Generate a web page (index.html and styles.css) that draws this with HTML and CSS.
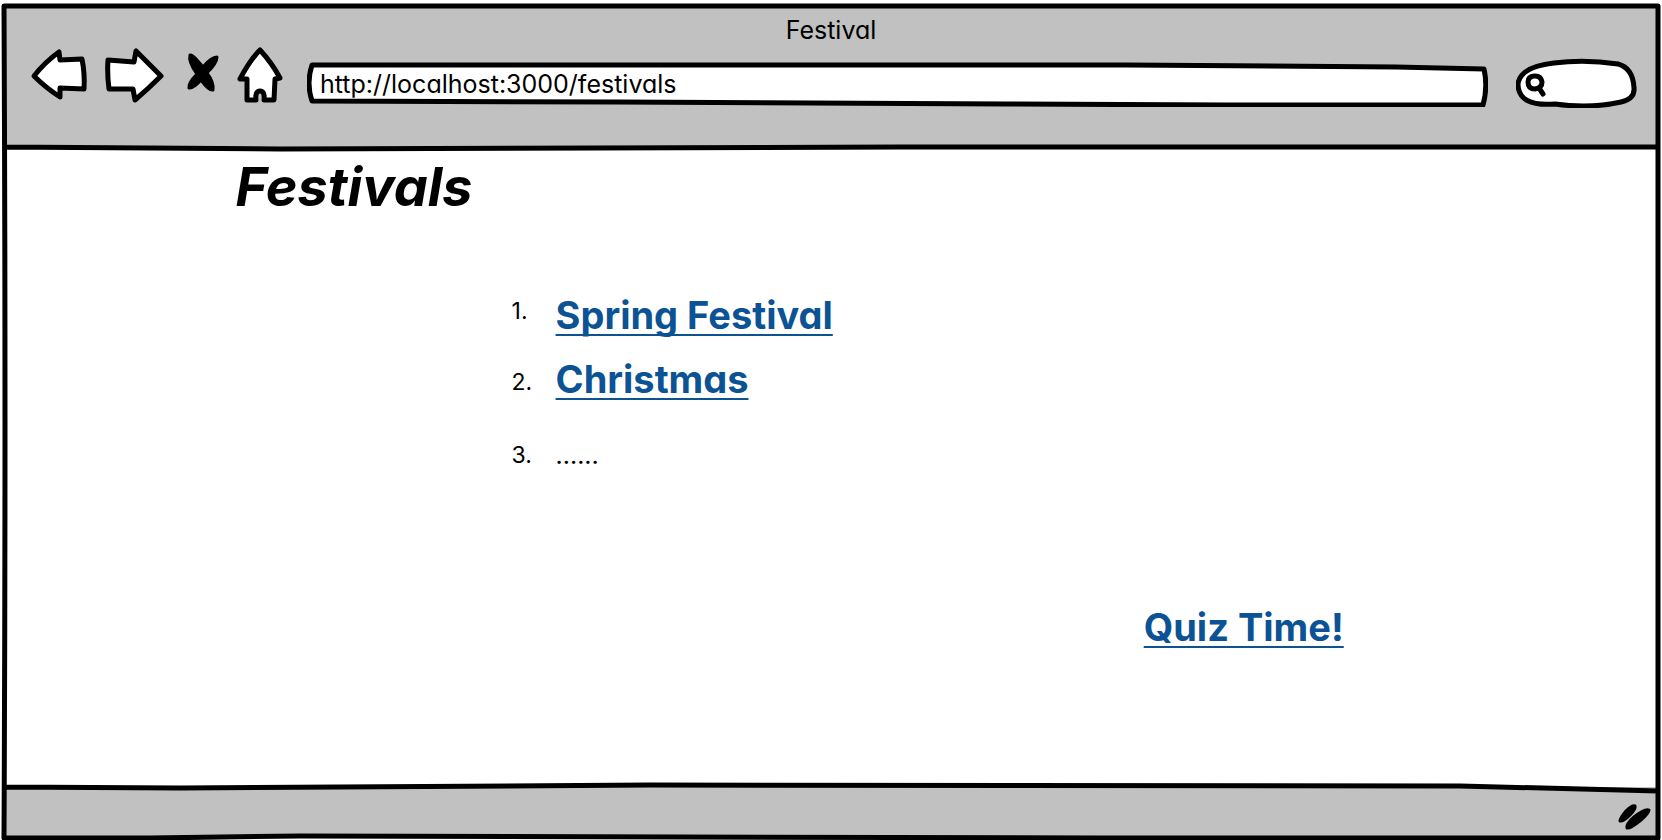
FILE: index.html
```html
<!DOCTYPE html>
<html lang="en">
<head>
<meta charset="utf-8">
<title>Festival</title>
<link rel="stylesheet" href="styles.css">
</head>
<body>
<div class="window">
  <header class="chrome">
    <div class="window-title">Festival</div>
    <div class="toolbar">
      <nav class="nav-buttons">
        <button class="nav-button" type="button" aria-label="Back"><svg width="58" height="56" viewBox="30 48 58 56"><path class="outline" d="M34 77 Q45 63 59 53 L60 61 L82 60 Q85 75 84 90 L60 89 L60 98 Q46 89 34 77Z"/></svg></button>
        <button class="nav-button" type="button" aria-label="Forward"><svg width="60" height="58" viewBox="104 48 60 58"><path class="outline" d="M161 77 L136 52 L134 63 L108 61 Q107 75 109 90 L133 90 L135 101 Q148 90 161 77Z"/></svg></button>
        <button class="nav-button stop" type="button" aria-label="Stop"><svg width="34" height="42" viewBox="187 52 34 42"><path class="stroke" d="M191 55 Q194 55 198 60 L204 67 Q212 57 218 57 Q218 63 208 73 Q215 82 214 90 Q210 91 202 80 Q194 89 190 88 Q189 83 198 74 Q189 62 191 55Z"/></svg></button>
        <button class="nav-button" type="button" aria-label="Home"><svg width="48" height="58" viewBox="236 47 48 58"><path class="outline" d="M260 50 Q250 60 240 79 L247 79 L247 100 L256 100 Q255 91 260 91 Q265 91 264 100 L274 100 L275 79 L280 78 Q272 63 260 50Z"/></svg></button>
      </nav>
      <form class="address">
        <svg class="sketch" viewBox="0 0 1182 46" preserveAspectRatio="none" aria-hidden="true"><path class="outline" d="M5 4 L820 4 L1090 6 L1178 8 Q1182 26 1177 44 L920 44 L700 43 L310 41 L5 40 Q-1 22 5 4Z"/></svg>
        <input class="address-input" type="text" aria-label="Address" value="http://localhost:3000/festivals">
      </form>
      <form class="search">
        <svg class="sketch" viewBox="1516 58 122 50" preserveAspectRatio="none" aria-hidden="true"><path class="outline" d="M1554 63 Q1585 59 1618 64 Q1633 68 1634 88 Q1635 99 1621 102 Q1590 109 1555 104 Q1518 107 1518 84 Q1520 67 1554 63Z"/></svg>
        <svg class="search-icon" width="24" height="26" viewBox="1524 74 24 26" aria-hidden="true"><path class="outline" d="M1535 78 Q1528 78 1528 84 Q1528 91 1535 91 Q1542 90 1542 84 Q1541 78 1535 78Z M1539 90 L1543 96"/></svg>
        <input class="search-input" type="text" aria-label="Search">
      </form>
    </div>
  </header>
  <main class="page">
    <h1 class="heading">Festivals</h1>
    <ol class="festivals">
      <li class="festival raised"><span class="number">1.</span><a class="link" href="#spring">Spring Festival</a></li>
      <li class="festival lowered"><span class="number">2.</span><a class="link" href="#christmas">Christmas</a></li>
      <li class="festival more"><span class="number">3.</span><span>......</span></li>
    </ol>
    <a class="link quiz" href="#quiz">Quiz Time!</a>
  </main>
  <footer class="status">
    <svg class="grip" width="36" height="30" viewBox="1616 802 36 30" aria-hidden="true"><path class="stroke" d="M1620 821 Q1620 818 1626 811 Q1632 805 1635 806 Q1636 809 1630 815 Q1623 822 1620 821Z M1627 828 Q1626 824 1634 817 Q1645 808 1649 810 Q1649 813 1641 820 Q1630 829 1627 828Z"/></svg>
  </footer>
  <svg class="frame" viewBox="0 0 1662 840" preserveAspectRatio="none" aria-hidden="true">
    <path d="M4 6 L1658 6 L1658 838 L1100 838 L300 836 L150 838 L4 838 Q6 420 4 6Z M4 147 L280 149 L900 147 L1658 147 M4 787 L180 788 L650 785 L1460 786 L1658 791"/>
  </svg>
</div>
</body>
</html>
```
FILE: styles.css
```css
* { box-sizing: border-box; }

body {
  margin: 0;
  background: #fff;
  color: #000;
  font-family: Inter, "Liberation Sans", sans-serif;
  font-feature-settings: "cv11";
  font-size: 25px;
}

.window {
  position: relative;
  display: flex;
  flex-direction: column;
  min-height: 100vh;
  padding: 6px 4px 3px;
}

.frame {
  position: absolute;
  inset: 0;
  width: 100%;
  height: 100%;
  pointer-events: none;
}

.frame path {
  fill: none;
  stroke: #000;
  stroke-width: 5px;
  stroke-linejoin: round;
}

.outline {
  fill: #fff;
  stroke: #000;
  stroke-width: 5px;
  stroke-linejoin: round;
  stroke-linecap: round;
}

.stroke {
  stroke: #000;
  stroke-width: 3px;
  stroke-linejoin: round;
}

.chrome {
  height: 142px;
  padding-top: 10px;
  background: #c1c1c1;
}

.window-title {
  line-height: 28px;
  text-align: center;
}

.toolbar {
  display: flex;
  align-items: flex-start;
  gap: 28px;
  padding: 3px 20px 0 26px;
}

.nav-buttons {
  display: flex;
  align-items: flex-start;
  gap: 16px;
  margin-right: -5px;
}

.nav-button {
  padding: 0;
  border: 0;
  background: none;
}

.nav-button svg { display: block; }

.stop { padding: 5px 0 0 6px; }

.address,
.search {
  position: relative;
  display: flex;
  align-items: center;
}

.address {
  flex: 1;
  height: 46px;
  margin-top: 14px;
}

.search {
  width: 122px;
  height: 50px;
  margin-top: 11px;
  padding: 4px 0 0 8px;
}

.sketch {
  position: absolute;
  inset: 0;
  width: 100%;
  height: 100%;
}

.search-icon {
  position: relative;
  flex: none;
}

.address-input,
.search-input {
  position: relative;
  width: 100%;
  min-width: 0;
  padding: 0;
  border: 0;
  outline: 0;
  background: none;
  color: inherit;
  font: inherit;
  font-feature-settings: inherit;
}

.address-input { padding-left: 13px; }

.page {
  display: flex;
  flex: 1;
  flex-direction: column;
  padding: 7px 19% 0 14%;
}

.heading {
  margin: 0;
  font-size: 54px;
  font-style: italic;
  line-height: 64px;
}

.festivals {
  display: grid;
  gap: 16px;
  margin: 72px 0 0;
  padding: 0 0 0 276px;
  list-style: none;
}

.festival {
  display: flex;
  line-height: 48px;
}

.number {
  width: 44px;
  font-size: 23px;
}

.raised .number { line-height: 40px; }

.lowered .number {
  align-self: flex-end;
  line-height: 42px;
}

.more { margin-top: 12px; }

.link {
  color: #0b5394;
  font-size: 38px;
  font-weight: 700;
  text-decoration: underline;
  text-decoration-thickness: 2px;
  text-decoration-skip-ink: none;
  text-underline-offset: 5px;
}

.quiz {
  align-self: flex-end;
  margin-top: 124px;
  line-height: 48px;
}

.status {
  display: flex;
  align-items: flex-start;
  justify-content: flex-end;
  height: 50px;
  padding: 15px 6px 0 0;
  background: #c1c1c1;
}
```
